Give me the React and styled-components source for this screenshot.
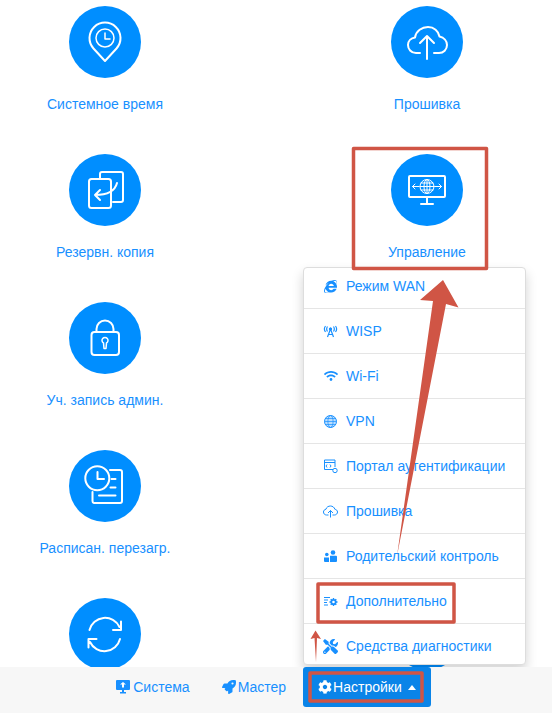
import React from 'react';
import styled, { createGlobalStyle } from 'styled-components';
import { FaInternetExplorer, FaWifi, FaTools, FaCog, FaRocket } from 'react-icons/fa';

const GlobalStyle = createGlobalStyle`
  html, body {
    margin: 0;
    padding: 0;
    background: #fff;
    overflow: hidden;
  }
  body {
    font-family: "Liberation Sans", Arial, sans-serif;
    font-size: 14px;
  }
`;

const blue = '#008eff';
const linkBlue = '#1890ff';
const red = '#d05545';

const Page = styled.div`
  position: relative;
  width: 552px;
  height: 713px;
  overflow: hidden;
`;

const Grid = styled.div`
  display: grid;
  grid-template-columns: 210px 210px;
  grid-auto-rows: 148px;
  column-gap: 112px;
  padding-top: 6px;
`;

const Tile = styled.a`
  display: flex;
  flex-direction: column;
  align-items: center;
  color: ${linkBlue};
  line-height: 20px;
`;

const Circle = styled.span`
  display: flex;
  width: 72px;
  height: 72px;
  margin-bottom: 16px;
  border-radius: 50%;
  background: ${blue};
`;

const TileSvg = styled.svg`
  width: 72px;
  height: 72px;
  fill: none;
  stroke: #fff;
  stroke-width: 2;
  stroke-linecap: round;
  stroke-linejoin: round;
`;

const Footer = styled.nav`
  position: absolute;
  left: 0;
  right: 0;
  bottom: 0;
  height: 46px;
  padding-right: 20px;
  display: flex;
  justify-content: center;
  align-items: flex-start;
  gap: 2px;
  background: #f7f7f7;
`;

const FooterLink = styled.a`
  display: flex;
  align-items: center;
  gap: ${(p) => p.$gap}px;
  height: 40px;
  padding: 0 15px;
  border-radius: 3px;
  color: ${(p) => (p.$active ? '#fff' : linkBlue)};
  background: ${(p) => (p.$active ? '#0a84e8' : 'transparent')};
  line-height: 20px;

  svg {
    flex: none;
  }
`;

const Caret = styled.svg`
  width: 8px;
  height: 5px;
  margin-left: 5px;
  fill: #fff;
`;

const Menu = styled.ul`
  position: absolute;
  left: 303px;
  top: 267px;
  width: 223px;
  height: 398px;
  box-sizing: border-box;
  margin: 0;
  padding: 0;
  list-style: none;
  background: #fff;
  border: 1px solid #ddd;
  border-radius: 4px;
  box-shadow: 0 6px 12px rgba(0, 0, 0, 0.175);
`;

const MenuItem = styled.li`
  display: flex;
  align-items: center;
  height: 45px;
  box-sizing: border-box;
  padding-left: 19px;
  gap: 8px;
  color: ${linkBlue};
  border-top: 1px solid #e5e5e5;
  line-height: 20px;

  &:first-child {
    height: 40px;
    padding-bottom: 4px;
    border-top: 0;
  }
`;

const MenuIcon = styled.span`
  display: flex;
  justify-content: center;
  align-items: center;
  width: 15px;
  height: 15px;
  flex: none;
`;

const Small = styled.svg`
  width: 15px;
  height: 15px;
  fill: none;
  stroke: ${linkBlue};
  stroke-width: 1;
`;

const SolidSmall = styled(Small)`
  stroke: none;
  fill: ${linkBlue};
`;

const Annotations = styled.svg`
  position: absolute;
  left: 0;
  top: 0;
  width: 552px;
  height: 713px;
  pointer-events: none;
`;

const tiles = [
  {
    label: 'Системное время',
    icon: (
      <>
        <path d="M36 55 L24.5 42.5 A15.5 15.5 0 1 1 47.5 42.5 Z" />
        <circle cx="36" cy="32" r="9" strokeWidth="1.5" />
        <path d="M36 27 V33 H41" strokeWidth="1.5" />
      </>
    ),
  },
  {
    label: 'Прошивка',
    icon: (
      <>
        <path d="M29 47 H25 C20 47 17 43 17 39 C17 35 20 32 24 31.5 C25 25 31 21 37 21 C43 21 47.5 25 48.5 30.5 C53 31.5 56 35 56 39 C56 43.5 52.5 47 48 47 H43" />
        <path d="M36 53 V30 M29 37 L36 30 L43 37" />
      </>
    ),
  },
  {
    label: 'Резервн. копия',
    icon: (
      <>
        <path d="M31 24 V20 A2 2 0 0 1 33 18 H52 A2 2 0 0 1 54 20 V46 A2 2 0 0 1 52 48 H44" />
        <rect x="20" y="25" width="22" height="29" rx="2.5" />
        <path d="M48 29 C46 37 38 41 26 41 M31 36 L26 41 L31 46" />
      </>
    ),
  },
  {
    label: 'Управление',
    icon: (
      <>
        <rect x="18" y="22" width="36" height="21" rx="1" />
        <path d="M36 43 V50 M30 50 H42" />
        <g strokeWidth="1">
          <circle cx="36" cy="32.5" r="7" />
          <ellipse cx="36" cy="32.5" rx="3" ry="7" />
          <path d="M29 32.5 H43 M30 29 H42 M30 36 H42 M36 25.5 V39.5" />
          <path d="M21.5 32.5 H28 M24 30 L21.5 32.5 L24 35 M44 32.5 H50.5 M48 30 L50.5 32.5 L48 35" />
        </g>
      </>
    ),
  },
  {
    label: 'Уч. запись админ.',
    icon: (
      <>
        <rect x="22.5" y="30" width="27.5" height="23" rx="3" />
        <path d="M27.5 30 V27 A8.5 8.5 0 0 1 44.5 27 V30" />
        <path d="M34.5 41 A3 3 0 1 1 37.5 41 L37 46.5 H35 Z" strokeWidth="1.5" />
      </>
    ),
  },
  { label: '', icon: null },
  {
    label: 'Расписан. перезагр.',
    icon: (
      <>
        <circle cx="28.3" cy="28.3" r="12" />
        <path d="M28.5 22 V29 H35" />
        <path d="M41 20 H51 A2 2 0 0 1 53 22 V51 A2 2 0 0 1 51 53 H25 A2 2 0 0 1 23.5 51 V42" />
        <path d="M42.5 29 H46.5 M41.5 37.5 H46.5 M30 45.5 H46.5" />
      </>
    ),
  },
  { label: '', icon: null },
  {
    label: '',
    icon: (
      <>
        <path d="M20.5 32 A16 16 0 0 1 50.5 29 M52 23.5 V32 H44" />
        <path d="M51 41 A16 16 0 0 1 21 44 M19.5 49.5 V41 H27.5" />
      </>
    ),
  },
  { label: '', icon: null },
];

const menu = [
  { label: 'Режим WAN', icon: <FaInternetExplorer size={13} color={linkBlue} /> },
  {
    label: 'WISP',
    icon: (
      <Small viewBox="0 0 15 15">
        <circle cx="7.5" cy="5" r="1.2" fill={linkBlue} />
        <path d="M7.5 5 L4.5 13 M7.5 5 L10.5 13 M5.5 10.5 H9.5" strokeWidth="1.2" />
        <path d="M4.5 2.5 C3.5 4 3.5 6 4.5 7.5 M10.5 2.5 C11.5 4 11.5 6 10.5 7.5 M2.5 2 C1 4 1 6 2.5 8 M12.5 2 C14 4 14 6 12.5 8" strokeWidth="1.2" />
      </Small>
    ),
  },
  { label: 'Wi-Fi', icon: <FaWifi size={14} color={linkBlue} /> },
  {
    label: 'VPN',
    icon: (
      <Small viewBox="0 0 15 15">
        <circle cx="7.5" cy="7.5" r="6" fill={linkBlue} fillOpacity="0.3" />
        <ellipse cx="7.5" cy="7.5" rx="2.6" ry="6" strokeOpacity="0.7" />
        <path d="M1.5 7.5 H13.5 M2.5 4.5 H12.5 M2.5 10.5 H12.5" strokeOpacity="0.7" />
      </Small>
    ),
  },
  {
    label: 'Портал аутентификации',
    icon: (
      <Small viewBox="0 0 15 15">
        <path d="M10 10.5 H1.5 V1 H12 V8" />
        <path d="M1.5 3.5 H12 M4 5.5 L3 7 L4 8.5 M7 5.5 L8 7 L7 8.5" />
        <circle cx="12" cy="11.5" r="2.2" />
      </Small>
    ),
  },
  {
    label: 'Прошивка',
    icon: (
      <Small viewBox="0 0 15 15">
        <path d="M5.5 11 H3.5 C1.5 11 .5 9.5 .5 8 C.5 6.5 1.5 5.5 3 5.2 C3.5 3 5.5 2 7.5 2 C9.5 2 11.5 3.5 11.8 5.2 C13.3 5.5 14.5 6.5 14.5 8 C14.5 9.5 13.3 11 11.5 11 H9.5" />
        <path d="M7.5 13.5 V6.5 M5 9 L7.5 6.5 L10 9" />
      </Small>
    ),
  },
  {
    label: 'Родительский контроль',
    icon: (
      <SolidSmall viewBox="0 0 15 15">
        <circle cx="3.8" cy="5.5" r="1.8" />
        <circle cx="10" cy="3.5" r="2.3" />
        <path d="M1 8.5 H6 V13 H2 A1 1 0 0 1 1 12 Z M7 6.8 H13 A1 1 0 0 1 14 7.8 V12 A1 1 0 0 1 13 13 H7 Z" />
      </SolidSmall>
    ),
  },
  {
    label: 'Дополнительно',
    icon: (
      <Small viewBox="0 0 15 15">
        <path d="M1 3.5 H7 M1 6 H5 M1 8.5 H4 M1 11 H5" />
        <circle cx="10.5" cy="8" r="2.2" strokeWidth="1.8" />
        <path d="M10.5 4 V5.5 M10.5 10.5 V12 M6.5 8 H8 M13 8 H14.5 M7.7 5.2 L8.8 6.3 M12.2 9.7 L13.3 10.8 M7.7 10.8 L8.8 9.7 M12.2 6.3 L13.3 5.2" strokeWidth="1.4" />
      </Small>
    ),
  },
  { label: 'Средства диагностики', icon: <FaTools size={15} color={linkBlue} /> },
];

function App() {
  return (
    <Page>
      <GlobalStyle />
      <Grid>
        {tiles.map((t, i) => (
          <Tile key={i}>
            <Circle>
              <TileSvg viewBox="0 0 72 72">{t.icon}</TileSvg>
            </Circle>
            {t.label}
          </Tile>
        ))}
      </Grid>

      <Menu>
        {menu.map((m) => (
          <MenuItem key={m.label}>
            <MenuIcon>{m.icon}</MenuIcon>
            {m.label}
          </MenuItem>
        ))}
      </Menu>

      <Footer>
        <FooterLink $gap={3}>
          <svg width="14" height="14" viewBox="0 0 14 14" fill={linkBlue}>
            <path d="M1 0 H13 A1 1 0 0 1 14 1 V9 A1 1 0 0 1 13 10 H8 V12 H10 V13.5 H4 V12 H6 V10 H1 A1 1 0 0 1 0 9 V1 A1 1 0 0 1 1 0 Z" />
            <path d="M7 2 L10 4.5 H8 V7.5 H6 V4.5 H4 Z" fill="#fff" />
          </svg>
          Система
        </FooterLink>
        <FooterLink $gap={2}>
          <FaRocket size={14} color={linkBlue} />
          Мастер
        </FooterLink>
        <FooterLink $active $gap={1}>
          <FaCog size={14} color="#fff" />
          Настройки
          <Caret viewBox="0 0 8 5">
            <path d="M4 0 L8 5 H0 Z" />
          </Caret>
        </FooterLink>
      </Footer>

      <Annotations viewBox="0 0 552 713">
        <g fill="none" stroke={red} strokeWidth="3.5" strokeLinejoin="round">
          <rect x="353.5" y="148.5" width="133" height="120" />
          <rect x="318" y="584" width="136" height="38" />
          <rect x="310" y="673" width="112" height="28" />
        </g>
        <g fill={red}>
          <path d="M443 280 L458.5 307.5 L446 304 L397 556 L433 301 L420 300 Z" />
          <path d="M315.5 630.5 L321 639 L317 638 L316 662 L314.5 638 L310.5 639 Z" />
        </g>
      </Annotations>
    </Page>
  );
}

export default App;
